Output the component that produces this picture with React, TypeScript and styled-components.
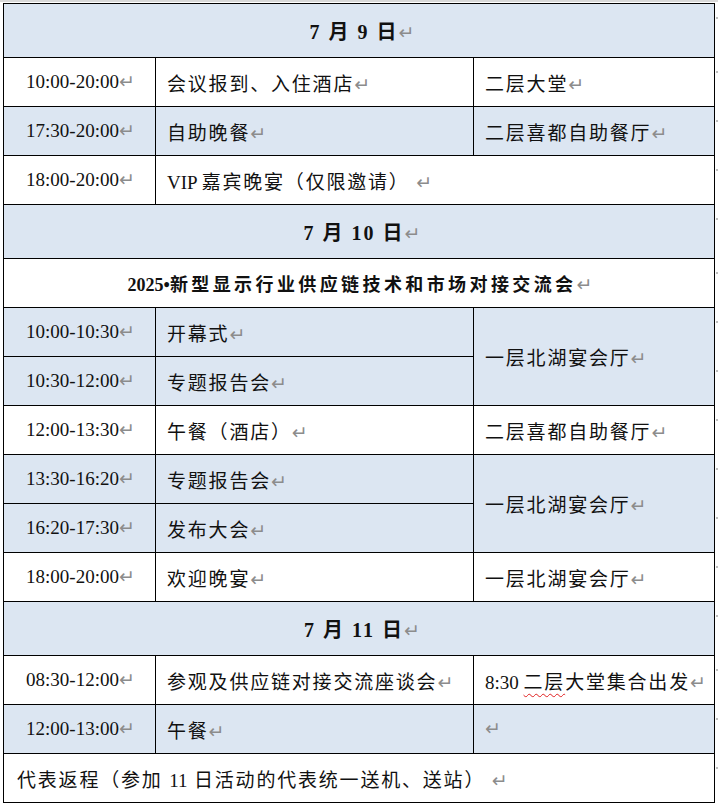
import React from 'react'
import styled, { createGlobalStyle } from 'styled-components'

const GlobalStyle = createGlobalStyle`
  html, body {
    margin: 0;
    padding: 0;
    background: #ffffff;
  }
  body {
    font-family: "Liberation Serif", "Noto Sans CJK SC", serif;
    color: #111111;
  }
`

const Page = styled.div`
  border-top: 2px solid #d9d9d9;
  padding: 1px 0 0 3px;
`

const Table = styled.table`
  border-collapse: collapse;
  table-layout: fixed;
  width: 715px;
`

const Row = styled.tr<{ $tall?: boolean }>`
  height: ${({ $tall }) => ($tall ? '54px' : '49px')};
`

const Cell = styled.td<{ $shade?: boolean }>`
  box-sizing: border-box;
  border: 1px solid #000000;
  background: ${({ $shade }) => ($shade ? '#dce6f2' : '#ffffff')};
  text-align: left;
  padding: 0 0 0 11px;
  font-size: 19px;
  letter-spacing: 1.8px;
  white-space: nowrap;
  vertical-align: middle;
  overflow: hidden;
`

const TimeCell = styled(Cell)`
  text-align: center;
  padding: 0 0 0 2px;
  letter-spacing: 0;
`

const DayCell = styled(Cell)`
  text-align: center;
  font-weight: 700;
  font-size: 20px;
  letter-spacing: 2px;
  padding: 0 0 0 6px;
`

const TitleCell = styled(Cell)`
  text-align: center;
  font-weight: 700;
  font-size: 18px;
  letter-spacing: 3.4px;
  padding: 0 0 0 2px;
`

const Latin = styled.span`
  letter-spacing: 0;
`

const Squiggle = styled.span`
  text-decoration: underline wavy #e02020;
  text-decoration-thickness: 1px;
  text-underline-offset: 4px;
`

const EndCell = styled.td`
  border: none;
  padding: 13px 0 0 1px;
  vertical-align: top;
`

const Dot = styled.i`
  display: block;
  width: 2px;
  height: 2px;
  border-radius: 1px;
  background: #a8a8a8;
`

const Mark = styled.span`
  font-family: "DejaVu Sans", sans-serif;
  font-weight: 400;
  font-size: 19px;
  line-height: 1;
  color: #8c8c8c;
  letter-spacing: 0;
  margin-left: 0;
`

const Ret = () => <Mark>↵</Mark>

const End = () => (
  <EndCell>
    <Dot />
  </EndCell>
)

type Item = { time: string; what: React.ReactNode; where?: React.ReactNode; span?: number; skip?: boolean; shade?: boolean }

const day9: Item[] = [
  { time: '10:00-20:00', what: '会议报到、入住酒店', where: '二层大堂' },
  { time: '17:30-20:00', what: '自助晚餐', where: '二层喜都自助餐厅', shade: true },
]

const day10: Item[] = [
  { time: '10:00-10:30', what: '开幕式', where: '一层北湖宴会厅', span: 2, shade: true },
  { time: '10:30-12:00', what: '专题报告会', skip: true, shade: true },
  { time: '12:00-13:30', what: '午餐（酒店）', where: '二层喜都自助餐厅' },
  { time: '13:30-16:20', what: '专题报告会', where: '一层北湖宴会厅', span: 2, shade: true },
  { time: '16:20-17:30', what: '发布大会', skip: true, shade: true },
  { time: '18:00-20:00', what: '欢迎晚宴', where: '一层北湖宴会厅' },
]

const day11: Item[] = [
  {
    time: '08:30-12:00',
    what: '参观及供应链对接交流座谈会',
    where: (
      <>
        <Latin>8:30 </Latin>
        <Squiggle>二层</Squiggle>大堂集合出发
      </>
    ),
  },
  { time: '12:00-13:00', what: '午餐', where: '', shade: true },
]

const ItemRow = ({ item }: { item: Item }) => (
  <Row>
    <TimeCell $shade={item.shade}>
      {item.time}
      <Ret />
    </TimeCell>
    <Cell $shade={item.shade}>
      {item.what}
      <Ret />
    </Cell>
    {!item.skip && (
      <Cell $shade={item.shade} rowSpan={item.span} style={{ paddingLeft: 11 }}>
        {item.where}
        <Ret />
      </Cell>
    )}
    <End />
  </Row>
)

const DayRow = ({ label }: { label: React.ReactNode }) => (
  <Row $tall>
    <DayCell colSpan={3} $shade>
      {label}
      <Ret />
    </DayCell>
    <End />
  </Row>
)

export default function App() {
  return (
    <Page>
      <GlobalStyle />
      <Table>
        <colgroup>
          <col style={{ width: 152 }} />
          <col style={{ width: 318 }} />
          <col style={{ width: 241 }} />
          <col style={{ width: 4 }} />
        </colgroup>
        <tbody>
          <DayRow label="7 月 9 日" />
          {day9.map((it) => (
            <ItemRow key={it.time} item={it} />
          ))}
          <Row>
            <TimeCell>
              18:00-20:00
              <Ret />
            </TimeCell>
            <Cell colSpan={2}>
              <Latin>VIP </Latin>嘉宾晚宴（仅限邀请） <Ret />
            </Cell>
            <End />
          </Row>
          <DayRow label="7 月 10 日" />
          <Row>
            <TitleCell colSpan={3}>
              <Latin>2025•</Latin>新型显示行业供应链技术和市场对接交流会
              <Ret />
            </TitleCell>
            <End />
          </Row>
          {day10.map((it) => (
            <ItemRow key={it.time} item={it} />
          ))}
          <DayRow label="7 月 11 日" />
          {day11.map((it) => (
            <ItemRow key={it.time} item={it} />
          ))}
          <Row>
            <Cell colSpan={3} style={{ paddingLeft: 13 }}>
              代表返程（参加 <Latin>11</Latin> 日活动的代表统一送机、送站） <Ret />
            </Cell>
            <End />
          </Row>
        </tbody>
      </Table>
    </Page>
  )
}
